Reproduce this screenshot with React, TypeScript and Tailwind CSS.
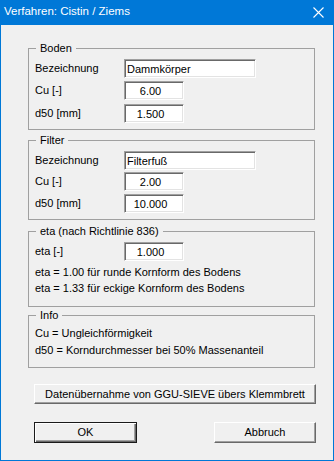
import type { ReactNode } from "react";

const sunken =
  "border border-t-[#a0a0a0] border-l-[#a0a0a0] border-b-white border-r-white shadow-[inset_1px_1px_0_#696969,inset_-1px_-1px_0_#e3e3e3] bg-white h-[19px] text-[11px] leading-[17px] text-black outline-none font-['Liberation_Sans',Arial,sans-serif]";

function Group({
  title,
  className,
  children,
}: {
  title: string;
  className?: string;
  children: ReactNode;
}) {
  return (
    <fieldset className={`border border-[#a0a0a0] px-[6px] ${className ?? ""}`}>
      <legend className="ml-[1px] px-[4px] leading-[13px]">{title}</legend>
      {children}
    </fieldset>
  );
}

function Row({
  label,
  value,
  wide,
  className,
}: {
  label: string;
  value: string;
  wide?: boolean;
  className?: string;
}) {
  return (
    <div className={`flex items-center h-[19px] ${className ?? ""}`}>
      <span className="w-[89px] -mt-[1px]">{label}</span>
      <input
        readOnly
        defaultValue={value}
        className={
          wide
            ? `${sunken} w-[132px] pl-[2px]`
            : `${sunken} w-[60px] text-center pr-[7px]`
        }
      />
    </div>
  );
}

function Button({ label, primary, className }: { label: string; primary?: boolean; className?: string }) {
  return (
    <button
      className={`bg-[#f0f0f0] text-black text-[11px] leading-none ${
        primary
          ? "border border-[#1a1a1a] shadow-[inset_1px_1px_0_#fff,inset_-1px_-1px_0_#696969,inset_-2px_-2px_0_#a0a0a0]"
          : "border border-t-white border-l-white border-b-[#696969] border-r-[#696969] shadow-[inset_-1px_-1px_0_#a0a0a0]"
      } ${className ?? ""}`}
    >
      {label}
    </button>
  );
}

export default function App() {
  return (
    <div className="w-[334px] h-[461px] bg-[#0078d7] flex flex-col font-['Liberation_Sans',Arial,sans-serif] text-[11px] text-black">
      {/* title bar */}
      <div className="h-[25px] flex items-center justify-between pl-[4px] pr-[10px] text-white shrink-0">
        <span className="text-[11.5px] -mt-[1px]">Verfahren: Cistin / Ziems</span>
        <svg width="11" height="11" viewBox="0 0 11 11" className="-mt-[1px]">
          <path d="M0.5 0.5 L10.5 10.5 M10.5 0.5 L0.5 10.5" stroke="#fff" strokeWidth="1.1" />
        </svg>
      </div>

      <div className="flex-1 mx-px mb-px bg-[#f0f0f0] pl-[27px] pr-[18px] pt-[17px]">
        <Group title="Boden" className="pt-[4px] pb-[6px]">
          <Row label="Bezeichnung" value="Dammkörper" wide />
          <Row label="Cu [-]" value="6.00" className="mt-[3px]" />
          <Row label="d50 [mm]" value="1.500" className="mt-[4px]" />
        </Group>

        <Group title="Filter" className="mt-[4px] pt-[4px] pb-[6px]">
          <Row label="Bezeichnung" value="Filterfuß" wide />
          <Row label="Cu [-]" value="2.00" className="mt-[2px]" />
          <Row label="d50 [mm]" value="10.000" className="mt-[3px]" />
        </Group>

        <Group title="eta (nach Richtlinie 836)" className="mt-[5px] pt-[4px] pb-[10px]">
          <Row label="eta [-]" value="1.000" />
          <div className="mt-[3px] leading-[16px]">
            <div>eta = 1.00 für runde Kornform des Bodens</div>
            <div>eta = 1.33 für eckige Kornform des Bodens</div>
          </div>
        </Group>

        <Group title="Info" className="mt-[2px] pt-[3px] pb-[8px]">
          <div className="leading-[17px]">
            <div>Cu = Ungleichförmigkeit</div>
            <div>d50 = Korndurchmesser bei 50% Massenanteil</div>
          </div>
        </Group>

        <Button
          label="Datenübernahme von GGU-SIEVE übers Klemmbrett"
          className="block mt-[16px] ml-[6px] w-[282px] h-[20px]"
        />

        <div className="flex justify-between mt-[18px] ml-[6px] w-[282px]">
          <Button label="OK" primary className="w-[103px] h-[21px]" />
          <Button label="Abbruch" className="w-[102px] h-[21px]" />
        </div>
      </div>
    </div>
  );
}
